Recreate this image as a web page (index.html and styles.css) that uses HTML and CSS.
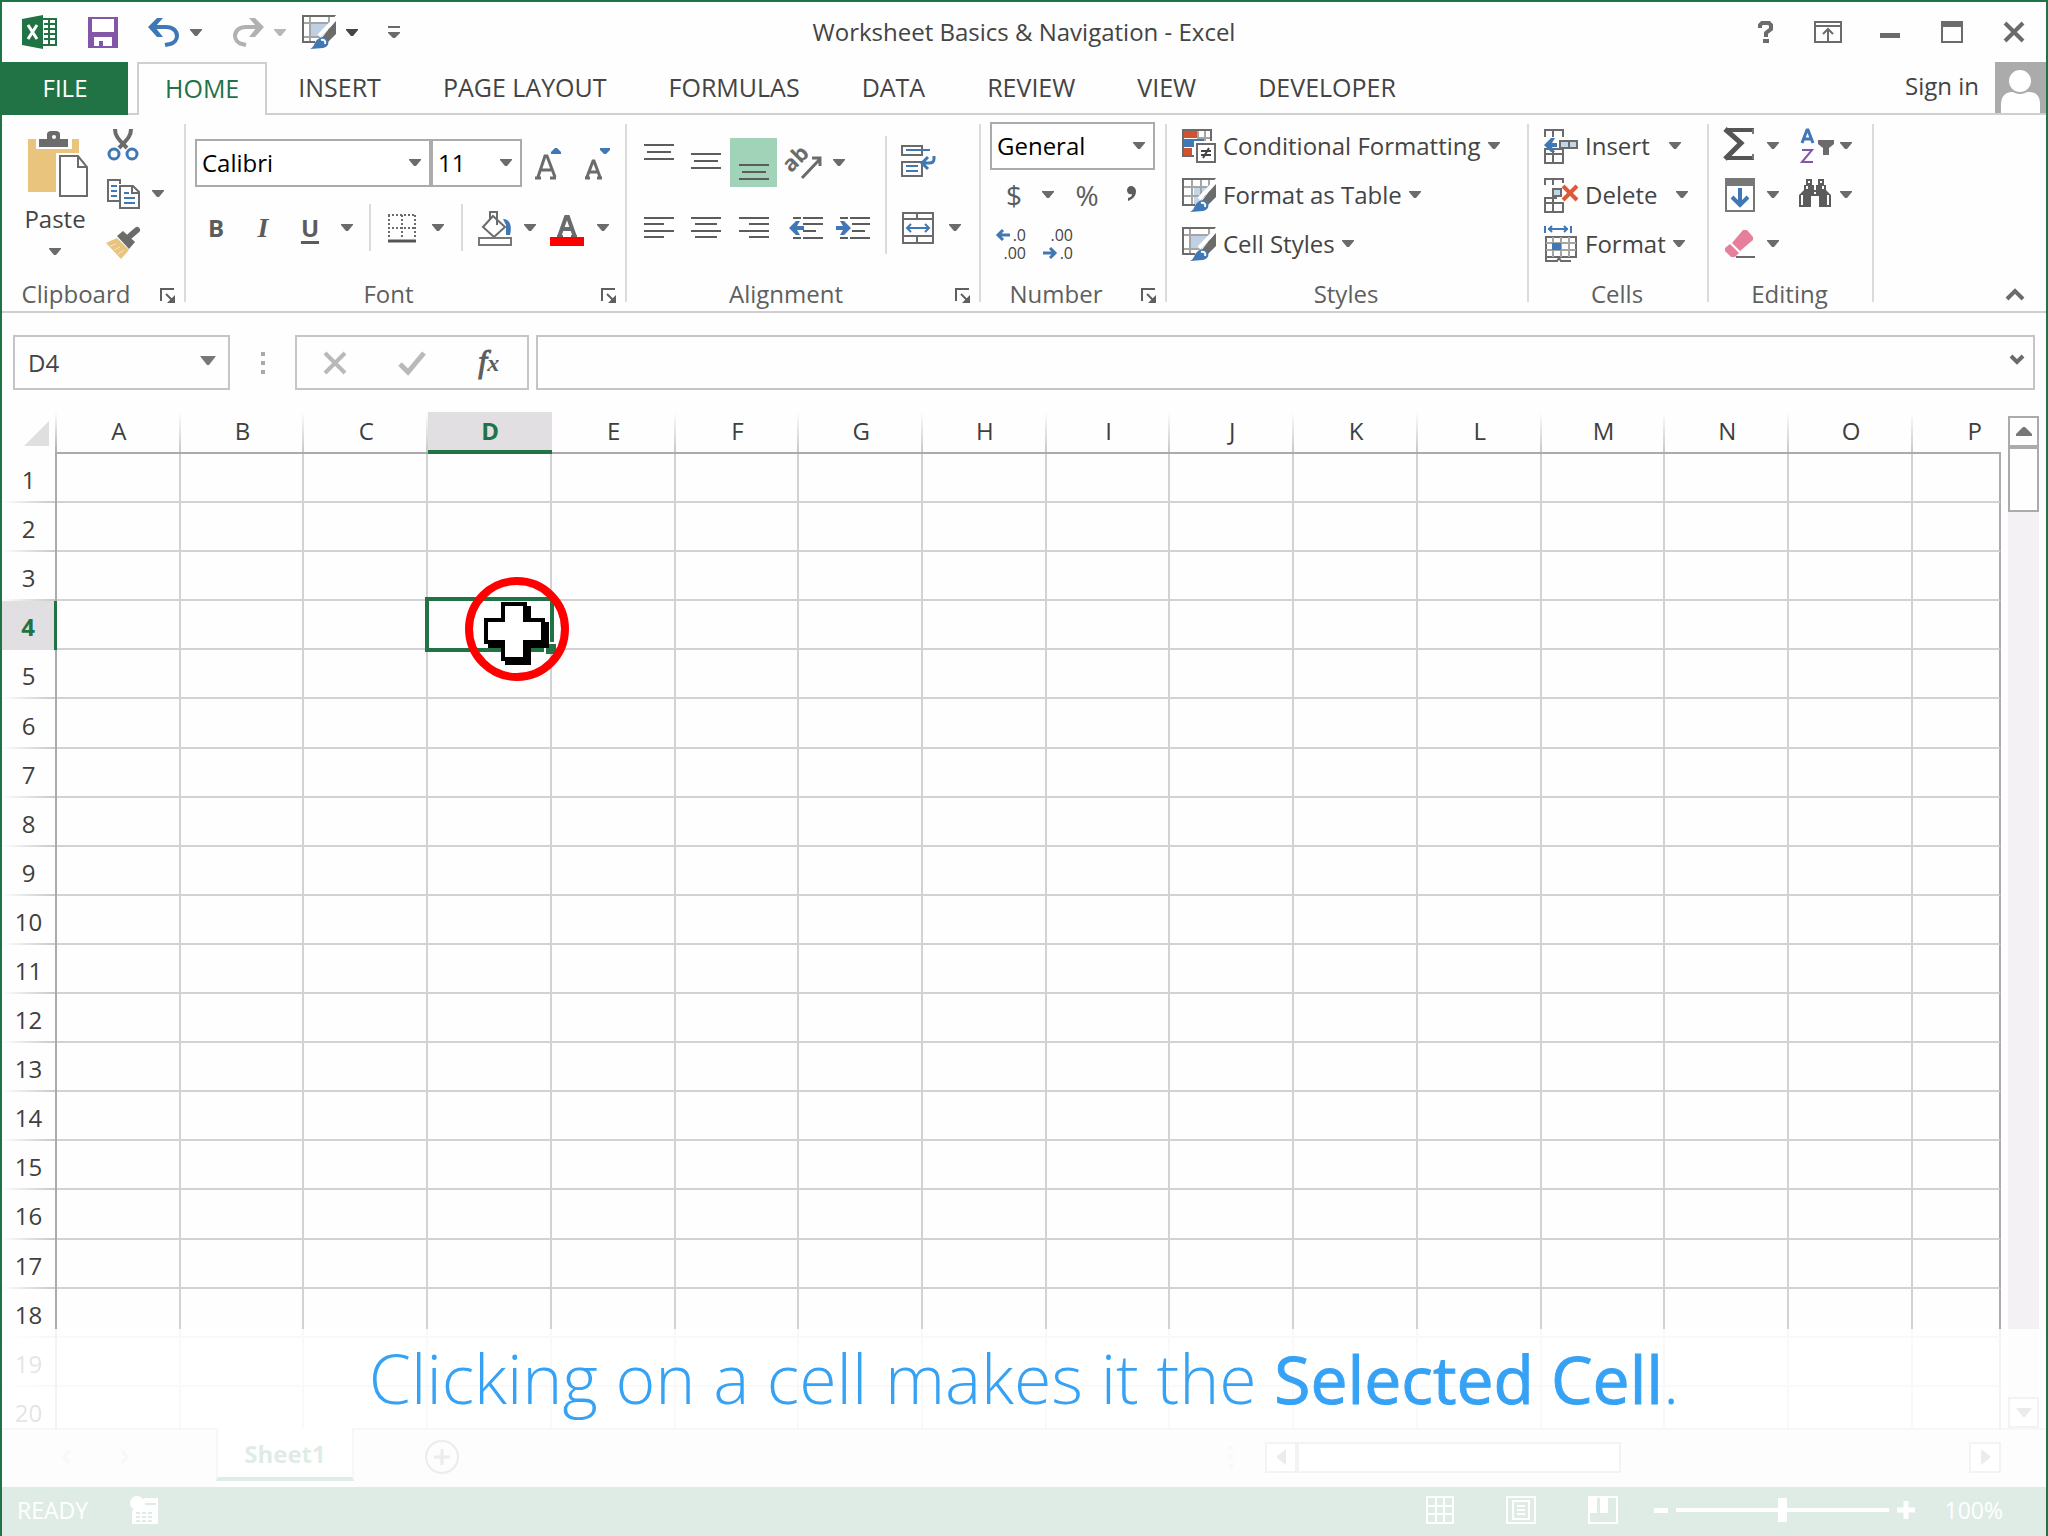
FILE: index.html
```html
<!DOCTYPE html>
<html lang="en">
<head>
<meta charset="utf-8">
<title>Worksheet Basics &amp; Navigation - Excel</title>
<link rel="stylesheet" href="styles.css">
</head>
<body>
<svg class="defs" aria-hidden="true">
  <symbol id="caret" viewBox="0 0 12 7"><path d="M0 0h12v1L7 7H5L0 1z" fill="currentColor"/></symbol>
  <symbol id="launcher" viewBox="0 0 16 16"><path d="M1 13V1h13" fill="none" stroke="currentColor" stroke-width="2"/><path d="M6 6l7 7" stroke="currentColor" stroke-width="2"/><path d="M15 7v8H7z" fill="currentColor"/></symbol>
  <symbol id="brush" viewBox="0 0 34 34">
    <path d="M34 5v14l-9 9-6-4z" fill="#6b6b6b"/>
    <path d="M36 1L17 21" stroke="#fff" stroke-width="4"/>
    <path d="M8 34c4-2 4-5 6-8 3-4 8-5 11-2 3 4 1 8-4 9z" fill="#3f78b5"/>
    <path d="M19 25c3-1 5 1 4 4" fill="none" stroke="#fff" stroke-width="2"/>
  </symbol>
  <symbol id="table-brush" viewBox="0 0 34 34">
    <rect x="12" y="9" width="20" height="17" fill="#c3d6e8"/>
    <path d="M1 9h32M1 18h24M10 1v26M19 1v24M27 1v16" stroke="#a5a5a5" stroke-width="2" fill="none"/>
    <path d="M33 12V1H1v26h12" stroke="#6b6b6b" stroke-width="2" fill="none"/>
    <path d="M35 8L16 25l-6 9h16l9-12z" fill="#fff"/>
    <use href="#brush"/>
  </symbol>
  <symbol id="cell-brush" viewBox="0 0 34 34">
    <rect x="8" y="9" width="20" height="13" fill="#bfd0e4"/>
    <path d="M1 8h32M1 22h20M8 1v26M27 1v16" stroke="#a5a5a5" stroke-width="2" fill="none"/>
    <path d="M33 12V1H1v26h12" stroke="#6b6b6b" stroke-width="2" fill="none"/>
    <path d="M35 8L16 25l-6 9h16l9-12z" fill="#fff"/>
    <use href="#brush"/>
  </symbol>
</svg>

<div class="window">
  <header class="titlebar">
    <div class="qat">
      <svg width="36" height="34" viewBox="0 0 36 34"><path d="M20 4h14v26H20z" fill="#fff" stroke="#217346" stroke-width="2"/><path d="M22 9h11M22 14h11M22 19h11M22 24h11M27 5v24" stroke="#217346" stroke-width="2"/><path d="M0 4l21-4v34L0 30z" fill="#217346"/><path d="M6 10l9 14M15 10L6 24" stroke="#fff" stroke-width="3"/></svg>
      <button class="tool" aria-label="Save"><svg width="30" height="31" viewBox="0 0 30 31"><path d="M0 0h30v31H0z" fill="#8456a8"/><path d="M4 2h22v13H4z" fill="#fff"/><path d="M6 20h18v9h-9v-5h-4v5H6z" fill="#fff"/></svg></button>
      <div class="pair">
        <button class="tool" aria-label="Undo"><svg width="32" height="30" viewBox="0 0 32 30"><path d="M4 10h14c7 0 11 4 11 9 0 4-3 7-7 8l-5 1" fill="none" stroke="#3f78b5" stroke-width="4"/><path d="M15 1h-6L0 10l9 10h6l-8-10z" fill="#3f78b5"/></svg></button>
        <button class="tool dim" aria-label="Undo history"><svg class="caret"><use href="#caret"/></svg></button>
      </div>
      <div class="near">
        <div class="pair">
          <button class="tool" aria-label="Redo"><svg width="32" height="30" viewBox="0 0 32 30"><path d="M28 10H14C7 10 3 14 3 19c0 4 3 7 7 8l4 1" fill="none" stroke="#b1b1b1" stroke-width="4"/><path d="M17 1h6l9 9-9 10h-6l8-10z" fill="#b1b1b1"/></svg></button>
          <button class="tool faint" aria-label="Redo history"><svg class="caret"><use href="#caret"/></svg></button>
        </div>
        <div class="pair">
          <button class="tool" aria-label="Cell styles"><svg width="34" height="34"><use href="#cell-brush"/></svg></button>
          <button class="tool" aria-label="More cell styles"><svg class="caret"><use href="#caret"/></svg></button>
        </div>
      </div>
      <button class="tool dim" aria-label="Customize toolbar"><svg width="12" height="12" viewBox="0 0 12 12"><path d="M0 1h12" stroke="currentColor" stroke-width="2"/><path d="M0 6h12v1l-5 5H5L0 7z" fill="currentColor"/></svg></button>
    </div>
    <h1 class="title">Worksheet Basics &amp; Navigation - Excel</h1>
    <div class="controls">
      <button aria-label="Help"><svg width="16" height="22" viewBox="0 0 16 22"><path d="M2 7V4l2-2h7l2 2v4l-5 4v4" fill="none" stroke="currentColor" stroke-width="4"/><path d="M5 18h6v4H5z" fill="currentColor"/></svg></button>
      <button aria-label="Ribbon display options"><svg width="28" height="22" viewBox="0 0 28 22"><path d="M1 1h26v20H1zM1 5h26M14 20V8M9 13l5-5 5 5" fill="none" stroke="currentColor" stroke-width="2"/></svg></button>
      <button aria-label="Minimize"><svg width="20" height="22" viewBox="0 0 20 22"><path d="M0 12h20v5H0z" fill="currentColor"/></svg></button>
      <button aria-label="Maximize"><svg width="22" height="22" viewBox="0 0 22 22"><path d="M1 1h20v20H1z" fill="none" stroke="currentColor" stroke-width="2"/><path d="M0 0h22v6H0z" fill="currentColor"/></svg></button>
      <button aria-label="Close"><svg width="22" height="22" viewBox="0 0 22 22"><path d="M2 2l18 18M20 2L2 20" stroke="currentColor" stroke-width="4"/></svg></button>
    </div>
  </header>

  <nav class="tabs">
    <a class="file" href="#file">FILE</a>
    <a class="tab active" href="#home">HOME</a>
    <a class="tab" href="#insert">INSERT</a>
    <a class="tab" href="#layout">PAGE LAYOUT</a>
    <a class="tab" href="#formulas">FORMULAS</a>
    <a class="tab" href="#data">DATA</a>
    <a class="tab" href="#review">REVIEW</a>
    <a class="tab" href="#view">VIEW</a>
    <a class="tab" href="#developer">DEVELOPER</a>
    <a class="signin" href="#signin">Sign in
      <svg width="51" height="51" viewBox="0 0 51 51"><path d="M0 0h51v51H0z" fill="#ababab"/><path d="M6 51V42c0-8 5-12 11-12h17c7 0 11 4 11 12v9z" fill="#fff"/><circle cx="25" cy="19" r="12" fill="#fff" stroke="#ababab" stroke-width="2"/></svg>
    </a>
  </nav>

  <section class="ribbon">
    <div class="group clipboard">
      <div class="body">
        <button class="paste"><svg width="66" height="66" viewBox="-4 0 66 66"><path d="M2 8h51v53H2z" fill="#e9c47c"/><path d="M10 6h36v12H10z" fill="#fff"/><path d="M13 16V8h8V3c0-2 2-3 4-3h5c2 0 4 1 4 3v5h8v8z" fill="#6b6b6b"/><circle cx="28" cy="6" r="2" fill="#fff"/><path d="M30 22h32v44H30z" fill="#fff"/><path d="M34 25h18l9 11v29H34z" fill="#fff" stroke="#6b6b6b" stroke-width="2"/><path d="M52 25v11h9" fill="none" stroke="#6b6b6b" stroke-width="2"/></svg>
          <span>Paste</span><svg class="caret dim"><use href="#caret"/></svg></button>
        <div class="stack">
          <button class="tool" aria-label="Cut"><svg width="34" height="32" viewBox="0 0 34 32"><path d="M9 0c0 6 2 9 12 19M25 0c0 6-2 9-12 19" fill="none" stroke="#6b6b6b" stroke-width="4"/><circle cx="8" cy="25" r="5" fill="none" stroke="#3f78b5" stroke-width="3"/><circle cx="26" cy="25" r="5" fill="none" stroke="#3f78b5" stroke-width="3"/></svg></button>
          <div class="pair">
            <button class="tool" aria-label="Copy"><svg width="34" height="32" viewBox="0 0 34 32"><path d="M13 23H2V2h12v4" fill="none" stroke="#6b6b6b" stroke-width="2"/><path d="M5 8h6M5 13h6M5 18h6" stroke="#3f78b5" stroke-width="2"/><path d="M14 8h13l6 6v16H14z" fill="#fff" stroke="#6b6b6b" stroke-width="2"/><path d="M26 8v7h7" fill="none" stroke="#6b6b6b" stroke-width="2"/><path d="M18 15h5M18 20h11M18 25h11" stroke="#3f78b5" stroke-width="2"/></svg></button>
            <button class="tool dim" aria-label="Copy options"><svg class="caret"><use href="#caret"/></svg></button>
          </div>
          <button class="tool" aria-label="Format Painter"><svg width="34" height="32" viewBox="0 0 34 32"><path d="M0 16l11-5 12 12-8 9z" fill="#e9c47c"/><path d="M4 19l6-2M8 23l6-3M12 27l6-4" stroke="#f7e6c4" stroke-width="1"/><path d="M11 9l6-5 12 11-6 7z" fill="#6b6b6b"/><path d="M24 9l7-6" stroke="#6b6b6b" stroke-width="6" stroke-linecap="round"/></svg></button>
        </div>
      </div>
      <div class="caption-row"><h2>Clipboard</h2><button class="launch" aria-label="Clipboard settings"><svg width="16" height="16"><use href="#launcher"/></svg></button></div>
    </div>

    <div class="group font">
      <div class="body rows2">
        <div class="row r1">
          <label class="combo"><select aria-label="Font"><option>Calibri</option></select><svg class="caret"><use href="#caret"/></svg></label>
          <label class="combo"><select aria-label="Font size"><option>11</option></select><svg class="caret"><use href="#caret"/></svg></label>
          <button class="tool" aria-label="Increase font size"><svg width="30" height="32" viewBox="0 0 30 32"><path d="M3 30L10 9h2l8 21M6 23h10M0 31h6M15 31h6" fill="none" stroke="#6b6b6b" stroke-width="3"/><path d="M16 7h10v-2l-4-4h-2l-4 4z" fill="#3f78b5"/></svg></button>
          <button class="tool" aria-label="Decrease font size"><svg width="26" height="32" viewBox="0 0 26 32"><path d="M2 30L8 14h1l6 16M4 25h9M0 31h5M12 31h5" fill="none" stroke="#6b6b6b" stroke-width="3"/><path d="M15 1h10v2l-4 4h-2l-4-4z" fill="#3f78b5"/></svg></button>
        </div>
        <div class="row r2">
          <button class="tool letter bold">B</button>
          <button class="tool letter italic">I</button>
          <button class="tool letter under">U</button>
          <button class="tool dim" aria-label="Underline style"><svg class="caret"><use href="#caret"/></svg></button>
          <i class="rule"></i>
          <button class="tool" aria-label="Borders"><svg width="28" height="30" viewBox="0 0 28 30"><path d="M0 2h28M0 15h28M1 2v24M14 2v24M27 2v24" fill="none" stroke="#6b6b6b" stroke-width="2" stroke-dasharray="2 2"/><path d="M0 28h28" stroke="#555" stroke-width="3"/></svg></button>
          <button class="tool dim" aria-label="Border styles"><svg class="caret"><use href="#caret"/></svg></button>
          <i class="rule"></i>
          <button class="tool" aria-label="Fill color"><svg width="34" height="36" viewBox="0 0 34 36"><path d="M15 6l12 11-11 10L5 17z" fill="#fff" stroke="#6b6b6b" stroke-width="2"/><path d="M12 9V2h7v13" fill="none" stroke="#6b6b6b" stroke-width="2"/><path d="M25 9c8 0 9 9 7 16h-4V15z" fill="#3f78b5"/><path d="M1 28h32v7H1z" fill="#fff" stroke="#777" stroke-width="2"/></svg></button>
          <button class="tool dim" aria-label="Fill colors"><svg class="caret"><use href="#caret"/></svg></button>
          <button class="tool" aria-label="Font color"><svg width="34" height="36" viewBox="0 0 34 36"><path d="M9 27l7-20h2l7 20M12 19h10M7 27h6M21 27h6" fill="none" stroke="#6b6b6b" stroke-width="4"/><path d="M0 27h34v9H0z" fill="#f00"/></svg></button>
          <button class="tool dim" aria-label="Font colors"><svg class="caret"><use href="#caret"/></svg></button>
        </div>
      </div>
      <div class="caption-row"><h2>Font</h2><button class="launch" aria-label="Font settings"><svg width="16" height="16"><use href="#launcher"/></svg></button></div>
    </div>

    <div class="group alignment">
      <div class="body">
        <div class="rows2">
          <div class="row r1">
            <button class="tool" aria-label="Top align"><svg class="tall" viewBox="0 0 30 49"><path d="M0 7h30M3 14h24M0 21h30"/></svg></button>
            <button class="tool" aria-label="Middle align"><svg class="tall" viewBox="0 0 30 49"><path d="M0 16h30M3 23h24M0 30h30"/></svg></button>
            <button class="tool on" aria-label="Bottom align"><svg class="tall" viewBox="0 0 30 49"><path d="M0 27h30M3 34h24M0 41h30"/></svg></button>
            <button class="tool" aria-label="Orientation"><svg width="34" height="32" viewBox="0 0 34 32"><text x="-3" y="20" transform="rotate(-45 8 16)" font-family="Open Sans, sans-serif" font-size="22" font-weight="700" fill="#6b6b6b">ab</text><path d="M14 31L32 12M24 11h8v8" fill="none" stroke="#6b6b6b" stroke-width="3"/></svg></button>
            <button class="tool dim" aria-label="Orientation options"><svg class="caret"><use href="#caret"/></svg></button>
          </div>
          <div class="row r2">
            <button class="tool" aria-label="Align left"><svg class="tall" viewBox="0 0 30 49"><path d="M0 15h30M0 21h20M0 28h30M0 34h20"/></svg></button>
            <button class="tool" aria-label="Center"><svg class="tall" viewBox="0 0 30 49"><path d="M0 15h30M4 21h22M0 28h30M4 34h22"/></svg></button>
            <button class="tool" aria-label="Align right"><svg class="tall" viewBox="0 0 30 49"><path d="M0 15h30M10 21h20M0 28h30M10 34h20"/></svg></button>
            <button class="tool" aria-label="Decrease indent"><svg width="34" height="24" viewBox="0 0 34 24"><path d="M4 2h8M14 2h20M14 8h20M14 15h13M4 22h8M14 22h20" stroke="#5c5c5c" stroke-width="2"/><path d="M0 12l7-7h4l-3 5h7v4H8l3 5H7z" fill="#3f78b5"/></svg></button>
            <button class="tool" aria-label="Increase indent"><svg width="34" height="24" viewBox="0 0 34 24"><path d="M4 2h8M14 2h20M16 8h18M16 15h13M4 22h8M14 22h20" stroke="#5c5c5c" stroke-width="2"/><path d="M15 12L8 5H4l3 5H0v4h7l-3 5h4z" fill="#3f78b5"/></svg></button>
          </div>
        </div>
        <i class="rule long"></i>
        <div class="rows2 wrap">
          <button class="tool" aria-label="Wrap text"><svg width="34" height="36" viewBox="0 1 34 36"><path d="M1 2h20v9H1zM1 18h20v14H1z" fill="none" stroke="#6b6b6b" stroke-width="2"/><path d="M5 6h24M5 22h12M5 27h12" stroke="#3f78b5" stroke-width="2"/><path d="M33 12v3c0 3-2 4-5 4h-7M27 13l-6 6 6 6" fill="none" stroke="#3f78b5" stroke-width="3"/></svg></button>
          <div class="merge">
            <button class="tool" aria-label="Merge and center"><svg width="32" height="34" viewBox="0 0 32 34"><path d="M1 2h30v30H1zM1 8h30M1 25h30M15 2v6M15 25v7" fill="none" stroke="#6b6b6b" stroke-width="2"/><path d="M5 17h22M9 13l-4 4 4 4M23 13l4 4-4 4" fill="none" stroke="#3f78b5" stroke-width="2"/></svg></button>
            <button class="tool dim" aria-label="Merge options"><svg class="caret"><use href="#caret"/></svg></button>
          </div>
        </div>
      </div>
      <div class="caption-row"><h2>Alignment</h2><button class="launch" aria-label="Alignment settings"><svg width="16" height="16"><use href="#launcher"/></svg></button></div>
    </div>

    <div class="group number">
      <div class="body rows3">
        <label class="combo"><select aria-label="Number format"><option>General</option></select><svg class="caret"><use href="#caret"/></svg></label>
        <div class="row r2">
          <button class="tool sign">$</button>
          <button class="tool dim" aria-label="Currencies"><svg class="caret"><use href="#caret"/></svg></button>
          <button class="tool sign">%</button>
          <button class="tool" aria-label="Comma style"><svg width="10" height="18" viewBox="0 0 10 18"><path d="M1 4c0-2 2-4 4-4s5 2 5 5c0 5-3 8-8 10v-3c3-1 4-2 4-4-3 1-5-1-5-4z" fill="#5c5c5c"/></svg></button>
        </div>
        <div class="row r3">
          <button class="tool decimals"><svg width="14" height="12" viewBox="0 0 14 12"><path d="M14 6H2M7 1L2 6l5 5" fill="none" stroke="#3f78b5" stroke-width="3"/></svg><span>.0</span><span class="wide">.00</span></button>
          <button class="tool decimals"><span class="wide">.00</span><svg width="14" height="12" viewBox="0 0 14 12"><path d="M0 6h12M7 1l5 5-5 5" fill="none" stroke="#3f78b5" stroke-width="3"/></svg><span>.0</span></button>
        </div>
      </div>
      <div class="caption-row"><h2>Number</h2><button class="launch" aria-label="Number settings"><svg width="16" height="16"><use href="#launcher"/></svg></button></div>
    </div>

    <div class="group styles">
      <div class="body rows3">
        <button class="command"><svg width="34" height="36" viewBox="0 0 34 36"><path d="M1 2h28v26H1z" fill="#fff" stroke="#6b6b6b" stroke-width="2"/><path d="M2 3h13v7H2zM2 20h8v7H2z" fill="#d2512e"/><path d="M2 11h20v8H2z" fill="#3f78b5"/><path d="M16 3v7M23 3v10M15 10h13" stroke="#a5a5a5" stroke-width="2"/><path d="M12 13h22v23H12z" fill="#fff"/><path d="M15 16h18v18H15z" fill="#fff" stroke="#6b6b6b" stroke-width="2"/><path d="M19 23h10M19 27h10M27 20l-6 10" stroke="#444" stroke-width="2"/></svg>Conditional Formatting<svg class="caret"><use href="#caret"/></svg></button>
        <button class="command"><svg width="34" height="34"><use href="#table-brush"/></svg>Format as Table<svg class="caret"><use href="#caret"/></svg></button>
        <button class="command"><svg width="34" height="34"><use href="#cell-brush"/></svg>Cell Styles<svg class="caret"><use href="#caret"/></svg></button>
      </div>
      <div class="caption-row"><h2>Styles</h2></div>
    </div>

    <div class="group cells">
      <div class="body rows3">
        <button class="command split"><svg width="34" height="36" viewBox="0 0 34 36"><path d="M1 9V2h18v7M9 2v7M1 26h18v9H1zM9 20v15M1 26v-5h18v5" fill="none" stroke="#6b6b6b" stroke-width="2"/><path d="M16 13h17v7H16z" fill="#c3d6e8" stroke="#6b6b6b" stroke-width="2"/><path d="M25 13v7" stroke="#6b6b6b" stroke-width="2"/><path d="M0 17l7-7h4l-3 5h5v4H8l3 5H7z" fill="#3f78b5"/></svg>Insert<svg class="caret"><use href="#caret"/></svg></button>
        <button class="command split"><svg width="34" height="36" viewBox="0 0 34 36"><path d="M1 8V2h18v4M9 2v6M1 35h18v-9H1zM9 20v15M1 26v-5h12" fill="none" stroke="#6b6b6b" stroke-width="2"/><path d="M9 12h8v7H9z" fill="#c3d6e8" stroke="#6b6b6b" stroke-width="2"/><path d="M19 9l14 14M33 9L19 23" stroke="#dd5a36" stroke-width="4"/></svg>Delete<svg class="caret"><use href="#caret"/></svg></button>
        <button class="command"><svg width="34" height="36" viewBox="0 0 34 36"><path d="M1 0v7M27 0v7M4 3h20M8 0L5 3l3 3M20 0l3 3-3 3" fill="none" stroke="#3f78b5" stroke-width="2"/><path d="M2 11h30v20H2z" fill="#fff" stroke="#6b6b6b" stroke-width="2"/><path d="M9 11v20M17 11v20M25 11v20M2 17h30M2 24h30" stroke="#a5a5a5" stroke-width="2"/><path d="M8 17h9v7H8z" fill="#3f78b5"/><path d="M2 31v4h11l2-3 2 3h10" fill="none" stroke="#6b6b6b" stroke-width="2"/></svg>Format<svg class="caret"><use href="#caret"/></svg></button>
      </div>
      <div class="caption-row"><h2>Cells</h2></div>
    </div>

    <div class="group editing">
      <div class="body rows3">
        <div class="row">
          <button class="tool" aria-label="AutoSum"><svg width="34" height="34" viewBox="2 2 34 34"><path d="M33 3H5M33 31H5" fill="none" stroke="#555" stroke-width="4"/><path d="M4 2l16 14L4 32" fill="none" stroke="#555" stroke-width="5"/><path d="M32 2v5M32 27v5" stroke="#777" stroke-width="2"/></svg></button>
          <button class="tool dim" aria-label="More functions"><svg class="caret"><use href="#caret"/></svg></button>
          <button class="tool" aria-label="Sort and filter"><svg width="36" height="36" viewBox="0 0 36 36"><path d="M3 15L8 2h1l5 13M5 11h8" fill="none" stroke="#3f78b5" stroke-width="3"/><path d="M3 22h10L3 34h11" fill="none" stroke="#8456a8" stroke-width="2"/><path d="M19 12h16v4l-5 4v7h-6v-7l-5-4z" fill="#6b6b6b"/></svg></button>
          <button class="tool dim" aria-label="Sort options"><svg class="caret"><use href="#caret"/></svg></button>
        </div>
        <div class="row">
          <button class="tool" aria-label="Fill"><svg width="30" height="34" viewBox="0 0 30 34"><path d="M1 1h28v32H1z" fill="#fff" stroke="#777" stroke-width="2"/><path d="M0 0h30v8H0z" fill="#777"/><path d="M15 10v17M7 19l8 8 8-8" fill="none" stroke="#3f78b5" stroke-width="4"/></svg></button>
          <button class="tool dim" aria-label="Fill options"><svg class="caret"><use href="#caret"/></svg></button>
          <button class="tool" aria-label="Find and select"><svg width="36" height="32" viewBox="0 1 36 32"><path d="M7 1h6v6h2v5h2V7h2V1h6v6h2v5l5 5v12H20V18h-8v11H0V17l5-5V7h2z" fill="#5c5c5c"/><path d="M3 17v10M29 17v10M10 3v2M22 3v2M8 8v3M24 8v3M16 14v2" stroke="#fff" stroke-width="2"/></svg></button>
          <button class="tool dim" aria-label="Find options"><svg class="caret"><use href="#caret"/></svg></button>
        </div>
        <div class="row">
          <button class="tool" aria-label="Clear"><svg width="32" height="30" viewBox="0 0 32 30"><path d="M19 1h4l6 7v3L16 22 8 14z" fill="#e57f9b"/><path d="M6 15l9 9-4 4H7l-6-6v-3z" fill="#e57f9b"/><path d="M12 28h19" stroke="#6b6b6b" stroke-width="2"/></svg></button>
          <button class="tool dim" aria-label="Clear options"><svg class="caret"><use href="#caret"/></svg></button>
        </div>
      </div>
      <div class="caption-row"><h2>Editing</h2></div>
    </div>

    <button class="collapse" aria-label="Collapse the ribbon"><svg width="20" height="13" viewBox="0 0 20 13"><path d="M2 11l8-8 8 8" fill="none" stroke="currentColor" stroke-width="4"/></svg></button>
  </section>

  <section class="formula">
    <div class="namebox"><input value="D4" aria-label="Name box"><svg width="16" height="9" viewBox="0 0 16 9"><path d="M0 0h16L9 9H7z" fill="#777"/></svg></div>
    <div class="grip"><svg width="4" height="22" viewBox="0 0 4 22"><path d="M0 0h4v4H0zM0 9h4v4H0zM0 18h4v4H0z" fill="#a9a9a9"/></svg></div>
    <div class="fxbox">
      <button class="tool" aria-label="Cancel"><svg width="24" height="22" viewBox="0 0 24 22"><path d="M2 1l20 20M22 1L2 21" stroke="#b9b9b9" stroke-width="4"/></svg></button>
      <button class="tool" aria-label="Enter"><svg width="28" height="24" viewBox="0 0 28 24"><path d="M2 13l8 8L26 2" fill="none" stroke="#b9b9b9" stroke-width="5"/></svg></button>
      <button class="tool fx" aria-label="Insert function"><span>f</span><small>x</small></button>
    </div>
    <div class="entry"><input aria-label="Formula"><svg width="16" height="12" viewBox="0 0 16 12"><path d="M2 1l6 6 6-6" fill="none" stroke="#6b6b6b" stroke-width="4"/></svg></div>
  </section>

  <main class="sheet">
    <div class="viewport">
      <table>
        <colgroup id="cols"><col class="numbers"></colgroup>
        <thead><tr id="letters"><td class="corner"><svg width="25" height="25" viewBox="0 0 25 25"><path d="M25 0v25H0z" fill="#dfdfdf"/></svg></td></tr></thead>
        <tbody id="cells"></tbody>
      </table>
    </div>
    <div class="vscroll">
      <button aria-label="Scroll up"><svg width="16" height="9" viewBox="0 0 16 9"><path d="M7 0h2l7 7v2H0V7z" fill="#777"/></svg></button>
      <div class="thumb"></div>
      <div class="track"></div>
      <button aria-label="Scroll down"><svg width="16" height="9" viewBox="0 0 16 9"><path d="M0 0h16L9 9H7z" fill="#777"/></svg></button>
    </div>
  </main>

  <div class="sheetbar">
    <div class="paging">
      <button aria-label="Previous sheet"><svg width="8" height="14" viewBox="0 0 8 14"><path d="M7 1L2 7l5 6" fill="none" stroke="#ccc" stroke-width="3"/></svg></button>
      <button aria-label="Next sheet"><svg width="8" height="14" viewBox="0 0 8 14"><path d="M1 1l5 6-5 6" fill="none" stroke="#ccc" stroke-width="3"/></svg></button>
    </div>
    <button class="sheettab">Sheet1</button>
    <button class="add" aria-label="New sheet"><svg width="34" height="34" viewBox="0 0 34 34"><circle cx="17" cy="17" r="16" fill="none" stroke="#777" stroke-width="2"/><path d="M17 9v16M9 17h16" stroke="#777" stroke-width="3"/></svg></button>
    <div class="hscroll">
      <svg width="4" height="22" viewBox="0 0 4 22"><path d="M0 0h4v4H0zM0 9h4v4H0zM0 18h4v4H0z" fill="#c9c9c9"/></svg>
      <button aria-label="Scroll left"><svg width="9" height="16" viewBox="0 0 9 16"><path d="M9 0v16L0 9V7z" fill="#777"/></svg></button>
      <div class="thumb"></div>
      <div class="track"></div>
      <button aria-label="Scroll right"><svg width="9" height="16" viewBox="0 0 9 16"><path d="M0 0v16l9-7V7z" fill="#777"/></svg></button>
    </div>
  </div>

  <footer class="status">
    <span class="ready">READY</span>
    <button aria-label="Record macro"><svg width="28" height="28" viewBox="0 0 28 28"><path d="M14 2h14v26H2V15" fill="#fff"/><circle cx="7" cy="7" r="7" fill="#fff"/><path d="M6 17h4M12 17h4M18 17h4M6 21h4M12 21h4M18 21h4M6 25h4M12 25h4M18 25h4M15 8h11" stroke="#217346" stroke-width="2"/></svg></button>
    <div class="views">
      <button aria-label="Normal view"><svg width="28" height="28" viewBox="0 0 28 28"><path d="M1 1h26v26H1zM10 1v26M18 1v26M1 10h26M1 18h26" fill="none" stroke="#fff" stroke-width="2"/></svg></button>
      <button aria-label="Page layout view"><svg width="30" height="28" viewBox="0 0 30 28"><path d="M1 1h28v26H1zM7 5h16v18H7zM11 10h8M11 14h8M11 18h8" fill="none" stroke="#fff" stroke-width="2"/></svg></button>
      <button aria-label="Page break view"><svg width="30" height="28" viewBox="0 0 30 28"><path d="M1 1h28v26H1z" fill="none" stroke="#fff" stroke-width="2"/><path d="M1 1h8v16H1zM12 1h8v16h-8z" fill="#fff"/></svg></button>
    </div>
    <div class="zoom">
      <button aria-label="Zoom out"><svg width="14" height="18" viewBox="0 0 14 18"><path d="M0 7h14v5H0z" fill="#fff"/></svg></button>
      <input type="range" min="0" max="100" value="50" aria-label="Zoom">
      <button aria-label="Zoom in"><svg width="18" height="18" viewBox="0 0 18 18"><path d="M9 0v18M0 9h18" stroke="#fff" stroke-width="5"/></svg></button>
    </div>
    <span class="percent">100%</span>
  </footer>

  <div class="lesson"><p>Clicking on a cell makes it the <strong>Selected Cell</strong>.</p></div>
</div>
<script src="grid.js"></script>
</body>
</html>
```
FILE: styles.css
```css
* { box-sizing: border-box; }
body {
  margin: 0;
  background: #fefefe;
  color: #444;
  font: 24px/34px "Open Sans", "Noto Sans", sans-serif;
}
button, input, select {
  margin: 0;
  padding: 0;
  border: 0;
  border-radius: 0;
  background: none;
  color: inherit;
  font: inherit;
}
button { display: flex; align-items: center; justify-content: center; white-space: nowrap; }
svg { display: block; flex: none; overflow: visible; }
a { color: inherit; text-decoration: none; }
h1, h2, p { margin: 0; font-size: inherit; font-weight: 400; }
.defs { position: absolute; width: 0; height: 0; }
.caret { width: 12px; height: 7px; }
.dim { color: #6b6b6b; }
.faint { color: #b8b8b8; }

.window {
  position: relative;
  display: flex;
  flex-direction: column;
  height: 100vh;
  border: 2px solid #217346;
  border-bottom: 0;
  overflow: hidden;
}

/* Title bar */
.titlebar {
  display: grid;
  grid-template-columns: 1fr auto 1fr;
  align-items: center;
  height: 60px;
}
.qat { display: flex; align-items: center; gap: 30px; padding-left: 20px; }
.pair { display: flex; align-items: center; gap: 10px; }
.near { display: flex; gap: 16px; }
.controls { display: flex; justify-content: flex-end; padding-right: 1px; color: #6b6b6b; }
.controls button { width: 62px; height: 60px; }

/* Ribbon tabs */
.tabs {
  display: flex;
  height: 53px;
  border-bottom: 2px solid #d0ced0;
  font-size: 25px;
  line-height: 51px;
}
.file {
  width: 126px;
  height: 53px;
  margin-right: 9px;
  background: #217346;
  color: #fff;
  font-size: 24px;
  text-align: center;
}
.tab { padding: 0 31px; }
.tab.active {
  height: 53px;
  padding: 0 26px;
  border: 2px solid #d0ced0;
  border-bottom: 0;
  background: #fefefe;
  color: #217346;
  line-height: 48px;
}
.signin { display: flex; gap: 16px; margin-left: auto; font-size: 24px; line-height: 48px; }

/* Ribbon */
.ribbon { display: flex; height: 198px; border-bottom: 2px solid #d0ced0; }
.group {
  display: flex;
  flex-direction: column;
  background: linear-gradient(#dcdadc, #dcdadc) right center / 2px 178px no-repeat;
}
.body { flex: 1; display: flex; }
.caption-row { display: flex; height: 33px; line-height: 32px; color: #5f5f5f; }
.caption-row h2 { flex: 1; text-align: center; }
.launch { width: 36px; padding-top: 3px; }
.tool { height: 49px; }
.row { display: grid; align-items: center; }
.rows2 { display: flex; flex-direction: column; gap: 16px; padding-top: 23px; }
.rows3 { display: flex; flex-direction: column; padding-top: 6px; }
.rule { width: 2px; height: 47px; background: #dcdadc; justify-self: center; }
.rule.long { height: 118px; margin-top: 21px; }

.combo { display: grid; align-items: center; }
.combo select {
  grid-area: 1 / 1;
  width: 100%;
  height: 48px;
  padding-left: 5px;
  border: 2px solid #ababab;
  background: #fff;
  color: #000;
  appearance: none;
}
.combo .caret { grid-area: 1 / 1; justify-self: end; margin-right: 10px; color: #6b6b6b; pointer-events: none; }

.clipboard { width: 184px; }
.clipboard .body { padding: 5px 0 0 20px; gap: 18px; }
.paste { flex-direction: column; justify-content: flex-start; width: 66px; padding-top: 11px; }
.paste span { margin: 5px 0 12px; }
.stack { display: flex; flex-direction: column; align-items: flex-start; }
.stack .pair { gap: 12px; }

.font { width: 441px; }
.font .body { padding-left: 9px; }
.font .r1 { grid-template-columns: 236px 91px 56px 40px; }
.font .r2 { grid-template-columns: 42px 52px 42px 32px 14px 50px 22px 26px 40px 30px 44px 28px; }
.letter { font-weight: 700; font-size: 24px; color: #5c5c5c; }
.italic { font-style: italic; font-family: "Liberation Serif", serif; font-size: 28px; }
.under { text-decoration: underline; text-decoration-thickness: 3px; text-underline-offset: 4px; }

.alignment { width: 354px; }
.alignment .body { padding-left: 9px; }
.alignment .r1 { grid-template-columns: 46px 48px 47px 56px 12px; }
.alignment .r2 { grid-template-columns: 46px 48px 47px 58px 36px; width: 249px; }
.tall { width: 30px; height: 49px; fill: none; stroke: #5c5c5c; stroke-width: 2; }
.on { background: #a0d3b8; }
.wrap .tool:first-child { width: 62px; }
.merge { display: flex; }

.number { width: 186px; }
.number .body { padding-left: 9px; }
.number .combo { width: 165px; height: 49px; }
.number .r2 { grid-template-columns: 48px 20px 58px 30px; }
.number .r3 { grid-template-columns: 42px 52px; }
.sign { font-size: 28px; color: #5c5c5c; }
.decimals {
  display: grid;
  grid-template-columns: 14px 16px;
  align-content: center;
  align-items: center;
  justify-content: center;
  font-size: 16px;
  line-height: 18px;
}
.decimals span { text-align: right; }
.decimals .wide { grid-column: 1 / 3; }

.styles { width: 362px; }
.cells { width: 180px; }
.styles .body, .cells .body { padding-left: 15px; }
.styles .caption-row, .cells .caption-row, .editing .caption-row { padding-right: 4px; }
.command { justify-content: flex-start; gap: 7px; height: 49px; }
.command .caret { color: #6b6b6b; }
.split .caret { margin-left: 12px; }

.editing { width: 165px; }
.editing .body { padding-left: 4px; }
.editing .row { grid-template-columns: 54px 12px 56px 22px; }
.editing .tool:nth-child(3) { justify-content: flex-end; }
.collapse { align-self: flex-end; width: 62px; height: 34px; margin-left: auto; color: #6b6b6b; }

/* Formula bar */
.formula { display: flex; height: 99px; padding: 22px 11px; }
.formula > div { display: flex; align-items: center; }
.formula .namebox, .formula .fxbox, .formula .entry { border: 2px solid #c6c4c6; background: #fefefe; }
.namebox { width: 217px; padding: 0 12px 4px 13px; }
.namebox input { flex: 1; min-width: 0; padding-top: 5px; }
.grip { width: 65px; justify-content: center; }
.fxbox { width: 234px; margin-right: 7px; }
.fxbox .tool { flex: 1; }
.fx { padding-bottom: 3px; font: italic 400 32px/40px "Liberation Serif", serif; color: #5c5c5c; }
.fx span { -webkit-text-stroke: 1px; }
.fx small { padding-top: 3px; font-size: 24px; font-weight: 700; }
.entry { flex: 1; padding: 0 8px 3px 0; }
.entry input { flex: 1; padding-left: 8px; }

/* Worksheet grid */
.sheet { flex: 1; display: flex; min-height: 0; }
.viewport { flex: 1; min-width: 0; overflow: hidden; }
table {
  width: 100%;
  height: calc(100% + 8px);
  table-layout: fixed;
  border-spacing: 0;
}
.numbers { width: 55px; }
.last { width: 88px; }
thead tr { height: 42px; }
th, td { padding: 0; }
th { font-weight: 400; color: #3f3f3f; }
thead th {
  padding-bottom: 2px;
  border-bottom: 2px solid #ababab;
  background: linear-gradient(#fefefe, #c9c7c9) right / 2px 100% no-repeat;
}
thead th:last-child { padding-right: 19px; background: none; text-align: right; }
.corner {
  padding: 0 8px 8px 0;
  background: linear-gradient(#fefefe, #ababab) right / 2px 100% no-repeat;
  vertical-align: bottom;
}
.corner svg { margin-left: auto; }
tbody th {
  padding-top: 3px;
  border-right: 2px solid #ababab;
  background: linear-gradient(90deg, #fefefe, #c9c7c9) bottom / 100% 2px no-repeat;
}
tbody td { border-right: 2px solid #d3d1d3; border-bottom: 2px solid #d3d1d3; }
tbody td:last-child { border-right-color: #ababab; }
thead th.current { padding-bottom: 0; border-bottom: 4px solid #217346; background: #e1dfe1; color: #217346; font-weight: 700; }
tbody th.current { border-right: 3px solid #217346; background: #e1dfe1; color: #217346; font-weight: 700; }
td.selected { position: relative; }
.outline {
  position: absolute;
  inset: -4px -4px -4px -3px;
  border: 4px solid #217346;
}
.handle {
  position: absolute;
  right: -6px;
  bottom: -6px;
  width: 12px;
  height: 12px;
  border: 2px solid #fefefe;
  border-width: 2px 0 0 2px;
  background: #217346;
}
.pointer { position: absolute; left: 37px; top: -24px; z-index: 1; }

.vscroll { display: flex; flex-direction: column; width: 31px; margin: 4px 7px 0; }
.vscroll button, .hscroll button, .thumb { flex: none; border: 2px solid #ababab; background: #fefefe; }
.vscroll button { height: 31px; }
.vscroll .thumb { height: 65px; }
.track { flex: 1; background: #f3f1f3; }

/* Sheet tabs */
.sheetbar { display: flex; height: 59px; padding-bottom: 3px; border-top: 2px solid #c6c4c6; background: #f1edf1; }
.paging { display: flex; justify-content: flex-end; gap: 51px; width: 214px; padding-right: 87px; align-items: center; }
.sheettab {
  width: 138px;
  height: 53px;
  margin-top: -2px;
  padding-top: 2px;
  border: 2px solid #c6c4c6;
  border-width: 0 2px 4px;
  border-bottom-color: #217346;
  background: #fefefe;
  color: #217346;
  font-weight: 700;
}
.add { width: 34px; margin-left: 71px; }
.hscroll { display: flex; align-items: center; width: 772px; margin: 0 45px 0 auto; }
.hscroll > svg { margin-right: 32px; }
.hscroll button { width: 32px; height: 31px; }
.hscroll .thumb { width: 324px; height: 31px; }
.hscroll .track { background: none; }

/* Status bar */
.status {
  display: flex;
  align-items: center;
  height: 49px;
  padding: 0 43px 4px 15px;
  background: #217346;
  color: #fff;
  font-size: 23px;
}
.ready { width: 113px; }
.views { display: flex; gap: 52px; margin-left: auto; }
.zoom { display: flex; align-items: center; gap: 8px; margin: 0 30px 0 36px; }
.zoom input { width: 213px; height: 24px; appearance: none; }
.zoom input::-webkit-slider-runnable-track { height: 4px; background: #fff; }
.zoom input::-webkit-slider-thumb { appearance: none; width: 9px; height: 24px; margin-top: -10px; background: #fff; }

/* Lesson caption laid over the foot of the window */
.lesson {
  position: absolute;
  inset: auto -2px 0 -2px;
  height: 207px;
  background: rgba(255, 255, 255, 0.86);
  color: #36a2f5;
  font-size: 68px;
  line-height: 98px;
  text-align: center;
}
.lesson p { font-weight: 300; }
.lesson strong { font-size: 66px; font-weight: 400; -webkit-text-stroke: 1px; }
```
FILE: grid.js
```js
const letters = "ABCDEFGHIJKLMNOP".split("");
const selected = { column: "D", row: 4 };

const cols = document.getElementById("cols");
const head = document.getElementById("letters");
const body = document.getElementById("cells");

const marker = `
  <div class="outline"></div><div class="handle"></div>
  <svg class="pointer" width="104" height="104" viewBox="0 0 104 104">
    <circle cx="52" cy="52" r="48" fill="none" stroke="#f00" stroke-width="8"/>
    <path d="M23 45h17V29h26v16h18v26H66v17H40V71H23z" fill="#000"/>
    <path d="M19 41h17V25h26v16h18v26H62v17H36V67H19z" fill="#000"/>
    <path d="M23 45h17V29h18v16h18v18H58v17H40V63H23z" fill="#fff"/>
  </svg>`;

for (const letter of letters) {
  const col = document.createElement("col");
  if (letter === "P") col.className = "last";
  cols.append(col);
  const th = document.createElement("th");
  th.scope = "col";
  th.textContent = letter;
  if (letter === selected.column) th.className = "current";
  head.append(th);
}

for (let row = 1; row <= 20; row++) {
  const tr = body.insertRow();
  const th = document.createElement("th");
  th.scope = "row";
  th.textContent = row;
  if (row === selected.row) th.className = "current";
  tr.append(th);
  for (const letter of letters) {
    const td = tr.insertCell();
    if (row === selected.row && letter === selected.column) {
      td.className = "selected";
      td.innerHTML = marker;
    }
  }
}
```
